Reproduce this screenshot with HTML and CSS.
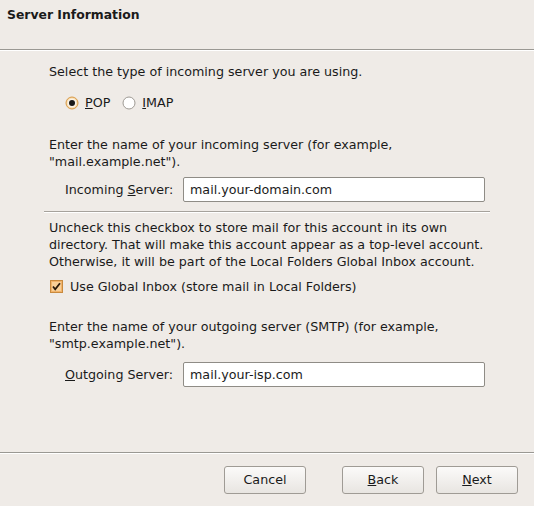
FILE: index.html
```html
<!DOCTYPE html>
<html>
<head>
<meta charset="utf-8">
<link rel="stylesheet" href="styles.css">
</head>
<body>
<div class="wizard">
  <div class="header"><div class="title">Server Information</div></div>
  <div class="content">
    <p class="text first">Select the type of incoming server you are using.</p>
    <div class="radios">
      <label class="radio">
        <svg width="14" height="14" viewBox="0 0 14 14"><circle cx="7" cy="7" r="6" fill="#f6d8a8" stroke="#d89a48" stroke-width="1"/><circle cx="7" cy="7" r="4.6" fill="#fbf3e6"/><circle cx="7" cy="7" r="3" fill="#1a1a1a"/></svg>
        <span><u>P</u>OP</span>
      </label>
      <label class="radio">
        <svg width="14" height="14" viewBox="0 0 14 14"><circle cx="7" cy="7" r="6" fill="#ffffff" stroke="#9e9a94" stroke-width="1"/></svg>
        <span><u>I</u>MAP</span>
      </label>
    </div>
    <p class="text gap-lg">Enter the name of your incoming server (for example,<br>"mail.example.net").</p>
    <div class="field in-field">
      <span class="label">Incoming <u>S</u>erver:</span>
      <div class="input">mail.your-domain.com</div>
    </div>
    <div class="sep"></div>
    <p class="text gap-sm">Uncheck this checkbox to store mail for this account in its own<br>directory. That will make this account appear as a top-level account.<br>Otherwise, it will be part of the Local Folders Global Inbox account.</p>
    <label class="check">
      <svg width="13" height="13" viewBox="0 0 13 13"><rect x="0.5" y="0.5" width="12" height="12" fill="#f2b36a" stroke="#c98a3e"/><rect x="2" y="2" width="9" height="9" fill="#f9cf96"/><path d="M3 6.5 L5.2 9.2 L10 3.2" fill="none" stroke="#2a1a0a" stroke-width="1.8"/></svg>
      <span>Use Global Inbox (store mail in Local Folders)</span>
    </label>
    <p class="text gap-md">Enter the name of your outgoing server (SMTP) (for example,<br>"smtp.example.net").</p>
    <div class="field out-field">
      <span class="label"><u>O</u>utgoing Server:</span>
      <div class="input">mail.your-isp.com</div>
    </div>
  </div>
  <div class="footer">
    <button class="btn cancel">Cancel</button>
    <button class="btn back"><u>B</u>ack</button>
    <button class="btn next"><u>N</u>ext</button>
  </div>
</div>
</body>
</html>
```
FILE: styles.css
```css
html, body {
  margin: 0;
  padding: 0;
  background: #efebe7;
}
body {
  font-family: "DejaVu Sans", sans-serif;
  font-size: 12.7px;
  line-height: 17px;
  color: #1a1a1a;
  width: 534px;
  height: 506px;
  overflow: hidden;
}
.wizard {
  display: flex;
  flex-direction: column;
  height: 506px;
}
.header {
  height: 50px;
  box-sizing: border-box;
  border-bottom: 1px solid #9a9893;
  box-shadow: 0 1px 0 #ffffff;
  padding: 6px 0 0 7px;
}
.title {
  font-weight: bold;
  font-size: 12.4px;
}
.content {
  margin: 0 44px;
  flex: 1;
}
.text {
  margin: 0;
  padding-left: 5px;
  white-space: nowrap;
}
.first { margin-top: 13px; }
.gap-lg { margin-top: 25px; }
.gap-sm { margin-top: 7px; }
.gap-md { margin-top: 23px; }
.radios {
  display: flex;
  gap: 12px;
  margin-top: 14px;
  padding-left: 21px;
}
.radio {
  display: flex;
  align-items: center;
  gap: 6px;
}
.radio svg { display: block; }
.field {
  display: flex;
  align-items: center;
  padding-left: 21px;
}
.in-field { margin-top: 7px; }
.out-field { margin-top: 10px; }
.label {
  width: 118px;
}
.input {
  width: 302px;
  height: 25px;
  box-sizing: border-box;
  background: #ffffff;
  border: 1px solid #8f8c86;
  border-radius: 2px;
  padding: 3px 0 0 6px;
}
.sep {
  height: 1px;
  background: #a6a29c;
  box-shadow: 0 1px 0 #ffffff;
  margin-top: 9px;
}
.check {
  display: flex;
  align-items: center;
  gap: 7px;
  margin-top: 8px;
  padding-left: 6px;
}
.check svg { display: block; }
.footer {
  height: 54px;
  border-top: 1px solid #9a9893;
  box-shadow: inset 0 1px 0 #ffffff;
  display: flex;
  align-items: flex-start;
  padding: 13px 0 0 224px;
  box-sizing: border-box;
}
.btn {
  width: 82px;
  height: 28px;
  font-family: "DejaVu Sans", sans-serif;
  font-size: 12.7px;
  color: #1a1a1a;
  background: linear-gradient(#fbfaf9, #e8e5e1);
  border: 1px solid #9f9b95;
  border-radius: 3px;
  padding: 0 0 2px 0;
}
.back { margin-left: 36px; }
.next { margin-left: 12px; }
```
